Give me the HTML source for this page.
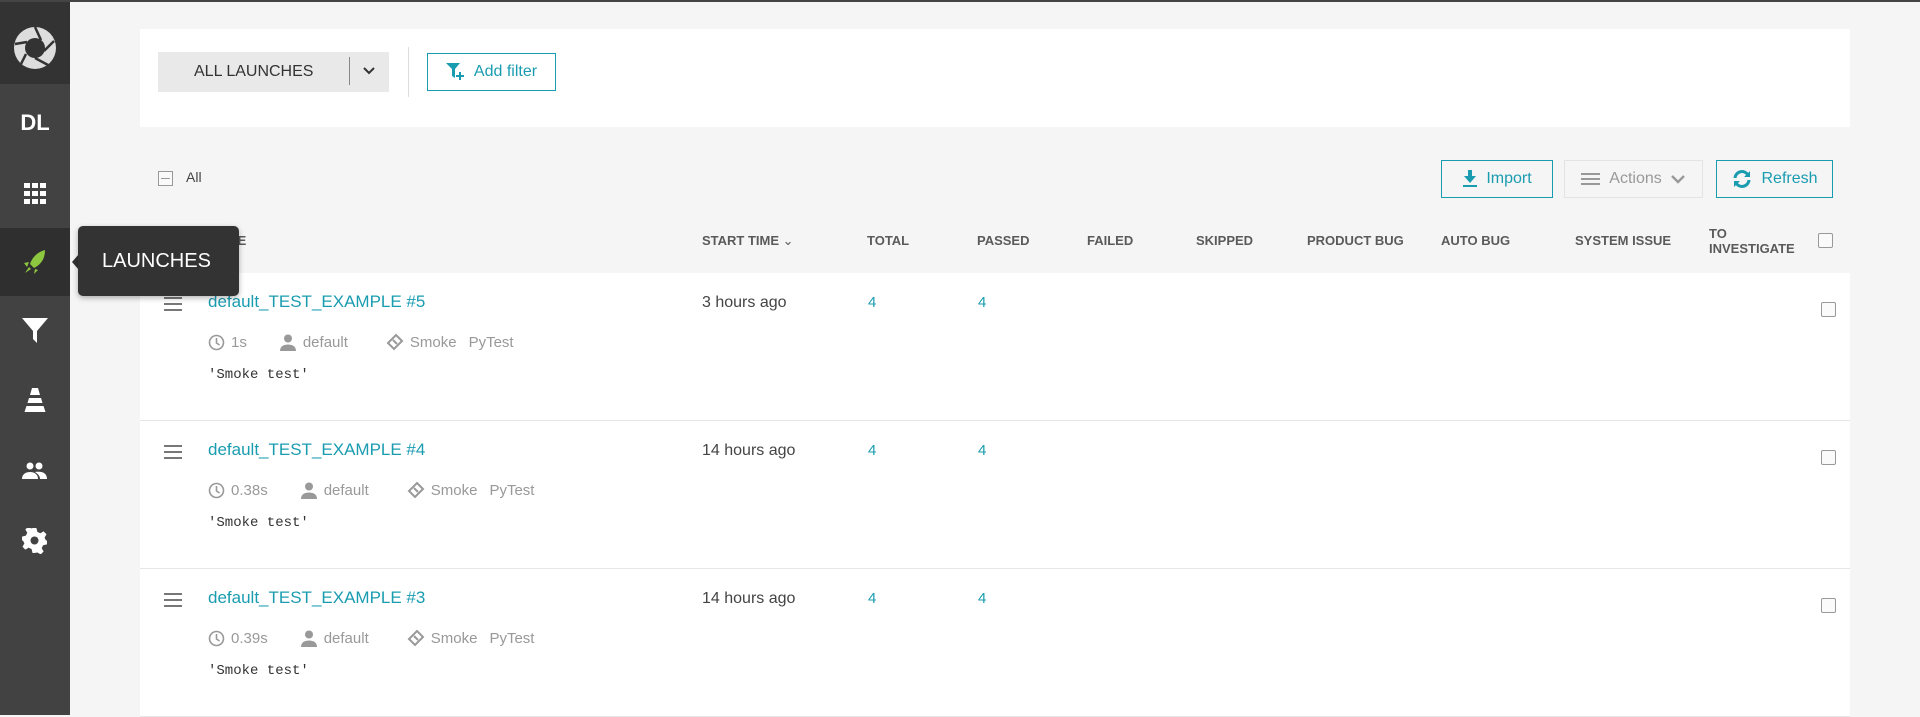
<!DOCTYPE html>
<html><head><meta charset="utf-8"><style>
*{box-sizing:border-box;margin:0;padding:0}
body{width:1920px;height:713px;overflow:hidden;background:#f5f5f5;font-family:"Liberation Sans",sans-serif;position:relative;border-top:2px solid #444}
.sb{position:absolute;left:0;top:0;width:70px;height:713px;background:#424243}
.logo{position:absolute;left:0;top:0;width:70px;height:82px;background:#333}
.ic{position:absolute;left:0;width:70px;display:flex;justify-content:center;align-items:center;color:#fff}
.panel{position:absolute;left:140px;top:27px;width:1710px;height:98px;background:#fff}
.abs{position:absolute}
.btn{position:absolute;border:1px solid #1a9cb0;color:#1a9cb0;font-size:16px;display:flex;align-items:center;justify-content:center;gap:8px;background:transparent}
.hd{position:absolute;top:231px;font-size:13px;font-weight:bold;color:#5a5a5a}
.row{position:absolute;left:140px;width:1710px;height:148px;background:#fff;border-bottom:1px solid #e6e6e6}
.t{position:absolute;left:68px;top:19px;font-size:17px;color:#1a9cb0}
.meta{position:absolute;left:68px;top:60px;font-size:15px;color:#999;display:flex;align-items:center}
.meta svg{margin-right:6px}
.desc{position:absolute;left:68px;top:94px;font-family:"Liberation Mono",monospace;font-size:14px;color:#333}
.tm{position:absolute;left:562px;top:21px;font-size:16px;color:#444}
.n{position:absolute;top:21px;font-size:15px;color:#1a9cb0}
.cb{position:absolute;width:15px;height:15px;border:1px solid #999;border-radius:2px;background:#fafafa}
.hm{position:absolute;left:24px;top:24px;width:18px}
.hm i{display:block;height:2px;background:#777;margin-bottom:4px}
</style></head><body>
<div class="sb"></div>
<div class="logo"><svg class="abs" style="left:11px;top:22px" width="48" height="48" viewBox="0 0 48 48"><circle cx="24" cy="24" r="21" fill="#ddd"/><circle cx="24" cy="24" r="10" fill="#333"/><g stroke="#333" stroke-width="2.5"><line x1="24" y1="3" x2="30" y2="16"/><line x1="43" y1="17" x2="33" y2="27"/><line x1="37" y1="41" x2="24" y2="34"/><line x1="10" y1="40" x2="15" y2="30"/><line x1="4" y1="20" x2="16" y2="18"/></g></svg></div>
<div class="ic" style="top:98px;height:45px;font-weight:bold;font-size:22px">DL</div>
<div class="ic" style="top:172px;height:40px"><svg width="22" height="22" viewBox="0 0 22 22" fill="#fff"><rect x="0" y="0" width="6" height="5"/><rect x="8" y="0" width="6" height="5"/><rect x="16" y="0" width="6" height="5"/><rect x="0" y="8" width="6" height="5"/><rect x="8" y="8" width="6" height="5"/><rect x="16" y="8" width="6" height="5"/><rect x="0" y="16" width="6" height="5"/><rect x="8" y="16" width="6" height="5"/><rect x="16" y="16" width="6" height="5"/></svg></div>
<div class="ic" style="top:226px;height:68px;background:#2f2f2f"><svg width="24" height="26" viewBox="0 0 24 26" fill="#8dc63f"><path d="M22 1C14 3 9 9 7 15l4 4c6-3 11-8 11-18zM6 13L1 14l3 4zM12 20l-1 5 4-4zM6 18l-4 6 6-4z"/></svg></div>
<div class="ic" style="top:312px;height:34px"><svg width="26" height="26" viewBox="0 0 26 26" fill="#fff"><path d="M0 0h26L15 13v12l-4-4V13z"/></svg></div>
<div class="ic" style="top:382px;height:34px"><svg width="26" height="26" viewBox="0 0 26 26" fill="#fff"><path d="M10 0h6l2 7H8zM7 10h12l1.5 5h-15zM4.5 18h17l2 6H2.5z"/></svg></div>
<div class="ic" style="top:452px;height:34px"><svg width="26" height="18" viewBox="0 0 26 18" fill="#fff"><circle cx="8" cy="4" r="3.5"/><circle cx="17" cy="4" r="3.5"/><path d="M0 17c0-5 4-7 8-7s8 2 8 7zM13 10c1-.3 2-.3 4-.3 4 0 8 2 8 7.3h-7c0-3-2-5-5-7z"/></svg></div>
<div class="ic" style="top:522px;height:34px"><svg width="26" height="26" viewBox="0 0 26 26" fill="#fff"><path d="M11 0h4l1 4 3 1.5 3.5-2 3 3-2 3.5L25 13l1 0v0 4l-4 1-1.5 3 2 3.5-3 3-3.5-2L13 26h-2l-1-4-3-1.5-3.5 2-3-3 2-3.5L1 13H0V9l4-1 1.5-3-2-3.5 3-3 3.5 2L11 0z" transform="scale(.96)"/><circle cx="12.5" cy="12.5" r="4" fill="#424243"/></svg></div>
<div class="abs" style="left:72px;top:252px;width:0;height:0;border-top:8px solid transparent;border-bottom:8px solid transparent;border-right:7px solid #333"></div>
<div class="abs" style="left:78px;top:224px;width:161px;height:70px;background:#333;border-radius:5px;color:#fff;font-size:20px;display:flex;align-items:center;padding-left:24px;box-shadow:0 2px 6px rgba(0,0,0,.3);z-index:5">LAUNCHES</div>

<div class="panel">
<div class="abs" style="left:18px;top:23px;width:231px;height:40px;background:#e9e9e9;font-size:16px;color:#333;display:flex;align-items:center"><span style="margin-left:36px">ALL LAUNCHES</span><span class="abs" style="left:191px;top:5px;width:1px;height:28px;background:#888"></span><svg class="abs" style="left:205px;top:14px" width="12" height="10" viewBox="0 0 12 10"><path d="M1 2l5 5 5-5" stroke="#333" stroke-width="2" fill="none"/></svg></div>
<div class="abs" style="left:268px;top:18px;width:1px;height:50px;background:#ddd"></div>
<div class="btn" style="left:287px;top:24px;width:129px;height:38px"><svg width="20" height="18" viewBox="0 0 20 18"><path d="M0 0h14L9 6v9l-3-2V6z" fill="#1a9cb0"/><path d="M14 9v8M10 13h8" stroke="#1a9cb0" stroke-width="2"/></svg>Add filter</div>
</div>

<div class="abs" style="left:158px;top:169px;width:15px;height:15px;border:1px solid #999;background:#fafafa"><i style="position:absolute;left:2px;top:6px;width:9px;height:1px;background:#999"></i></div>
<div class="abs" style="left:186px;top:167px;font-size:14px;color:#444">All</div>

<div class="btn" style="left:1441px;top:158px;width:112px;height:38px"><svg width="16" height="18" viewBox="0 0 16 18" fill="#1a9cb0"><path d="M6 0h4v6h4l-6 7-6-7h4z"/><rect x="1" y="15" width="14" height="2"/></svg>Import</div>
<div class="btn" style="left:1564px;top:158px;width:139px;height:38px;border-color:#e3e3e3;color:#999"><svg width="20" height="14" viewBox="0 0 20 14" fill="#999"><rect y="1" width="19" height="2"/><rect y="6" width="19" height="2"/><rect y="11" width="19" height="2"/></svg>Actions<svg width="16" height="10" viewBox="0 0 16 10"><path d="M2 2l6 6 6-6" stroke="#999" stroke-width="2.4" fill="none"/></svg></div>
<div class="btn" style="left:1716px;top:158px;width:117px;height:38px"><svg width="22" height="20" viewBox="0 0 22 20" fill="none" stroke="#1a9cb0" stroke-width="3"><path d="M4 9a7 7 0 0 1 13-3M18 11a7 7 0 0 1-13 3"/><path d="M19 2v6h-6M3 18v-6h6" fill="#1a9cb0" stroke="none"/></svg>Refresh</div>

<div class="hd" style="left:208px">NAME</div>
<div class="hd" style="left:702px">START TIME <span style="font-weight:normal">&#8964;</span></div>
<div class="hd" style="left:867px">TOTAL</div>
<div class="hd" style="left:977px">PASSED</div>
<div class="hd" style="left:1087px">FAILED</div>
<div class="hd" style="left:1196px">SKIPPED</div>
<div class="hd" style="left:1307px">PRODUCT BUG</div>
<div class="hd" style="left:1441px">AUTO BUG</div>
<div class="hd" style="left:1575px">SYSTEM ISSUE</div>
<div class="hd" style="left:1709px;top:224px;line-height:15px">TO<br>INVESTIGATE</div>
<div class="cb" style="left:1818px;top:231px"></div>

<div class="row" style="top:271px"><div class="hm"><i></i><i></i><i></i></div><div class="t">default_TEST_EXAMPLE #5</div>
<div class="meta"><svg width="17" height="17" viewBox="0 0 17 17"><circle cx="8.5" cy="8.5" r="7" fill="none" stroke="#999" stroke-width="1.6"/><path d="M8.5 4v5l3 2" stroke="#999" stroke-width="1.6" fill="none"/></svg>1s<span style="width:32px"></span><svg width="18" height="17" viewBox="0 0 18 17" fill="#999"><circle cx="9" cy="4.5" r="4"/><path d="M1 17c0-5 4-6.5 8-6.5s8 1.5 8 6.5z"/></svg>default<span style="width:38px"></span><svg width="18" height="18" viewBox="0 0 18 18"><path d="M10 2l6 6-8 8-6-6zM7 7l4 4" stroke="#999" stroke-width="2" fill="none"/></svg>Smoke<span style="width:12px"></span>PyTest</div><div class="desc">'Smoke test'</div>
<div class="tm">3 hours ago</div><div class="n" style="left:728px">4</div><div class="n" style="left:838px">4</div><div class="cb" style="left:1681px;top:29px"></div></div>
<div class="row" style="top:419px"><div class="hm"><i></i><i></i><i></i></div><div class="t">default_TEST_EXAMPLE #4</div>
<div class="meta"><svg width="17" height="17" viewBox="0 0 17 17"><circle cx="8.5" cy="8.5" r="7" fill="none" stroke="#999" stroke-width="1.6"/><path d="M8.5 4v5l3 2" stroke="#999" stroke-width="1.6" fill="none"/></svg>0.38s<span style="width:32px"></span><svg width="18" height="17" viewBox="0 0 18 17" fill="#999"><circle cx="9" cy="4.5" r="4"/><path d="M1 17c0-5 4-6.5 8-6.5s8 1.5 8 6.5z"/></svg>default<span style="width:38px"></span><svg width="18" height="18" viewBox="0 0 18 18"><path d="M10 2l6 6-8 8-6-6zM7 7l4 4" stroke="#999" stroke-width="2" fill="none"/></svg>Smoke<span style="width:12px"></span>PyTest</div><div class="desc">'Smoke test'</div>
<div class="tm">14 hours ago</div><div class="n" style="left:728px">4</div><div class="n" style="left:838px">4</div><div class="cb" style="left:1681px;top:29px"></div></div>
<div class="row" style="top:567px"><div class="hm"><i></i><i></i><i></i></div><div class="t">default_TEST_EXAMPLE #3</div>
<div class="meta"><svg width="17" height="17" viewBox="0 0 17 17"><circle cx="8.5" cy="8.5" r="7" fill="none" stroke="#999" stroke-width="1.6"/><path d="M8.5 4v5l3 2" stroke="#999" stroke-width="1.6" fill="none"/></svg>0.39s<span style="width:32px"></span><svg width="18" height="17" viewBox="0 0 18 17" fill="#999"><circle cx="9" cy="4.5" r="4"/><path d="M1 17c0-5 4-6.5 8-6.5s8 1.5 8 6.5z"/></svg>default<span style="width:38px"></span><svg width="18" height="18" viewBox="0 0 18 18"><path d="M10 2l6 6-8 8-6-6zM7 7l4 4" stroke="#999" stroke-width="2" fill="none"/></svg>Smoke<span style="width:12px"></span>PyTest</div><div class="desc">'Smoke test'</div>
<div class="tm">14 hours ago</div><div class="n" style="left:728px">4</div><div class="n" style="left:838px">4</div><div class="cb" style="left:1681px;top:29px"></div></div>
</body></html>
